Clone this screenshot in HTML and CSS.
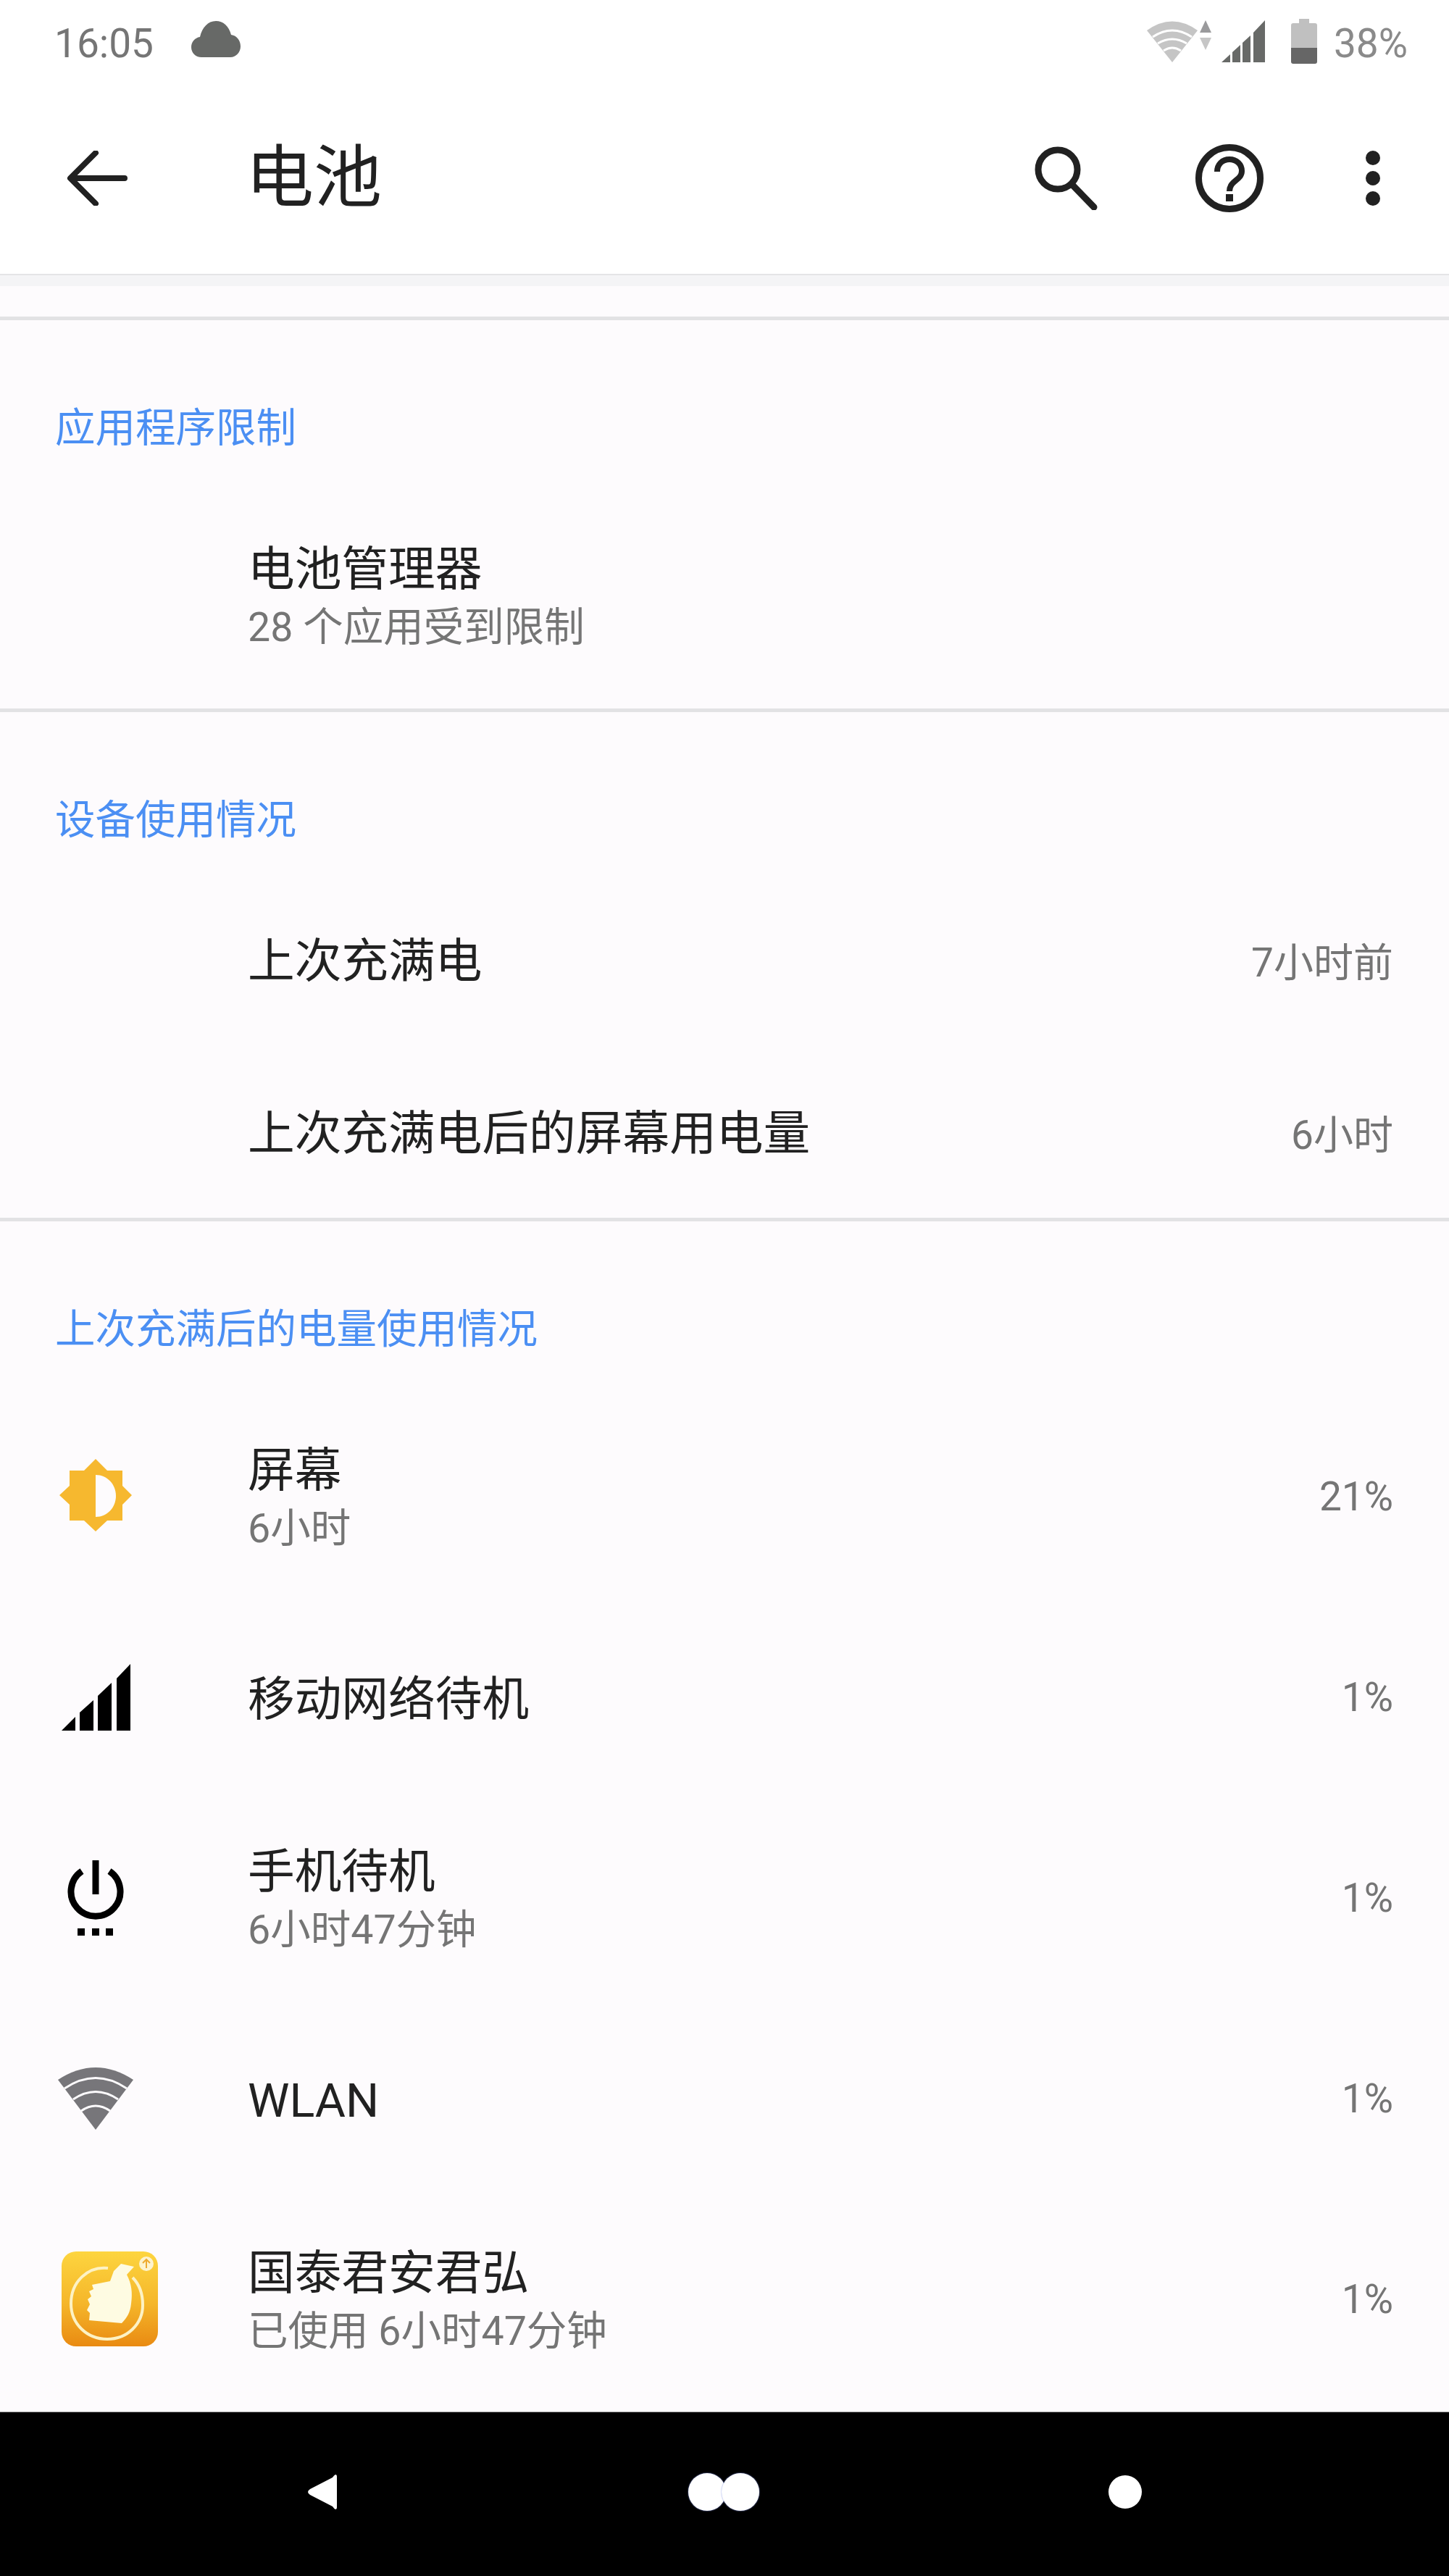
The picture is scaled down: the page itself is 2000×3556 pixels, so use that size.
FILE: index.html
```html
<!DOCTYPE html>
<html lang="zh-CN">
<head>
    <meta charset="UTF-8">
    <title>电池</title>
    <link rel="stylesheet" href="styles.css">
</head>
<body>
    <div class="phone">
        <header class="top">
            <div class="status-bar">
                <div class="status-left">
                    <span class="clock">16:05</span>
                    <svg class="cloud" width="68" height="50" viewBox="0 0 68 50"><path d="M14 50C6 50 0 44 0 36c0-7 5-13 12-14C15 9 23 0 34 0c10 0 18 7 21 19 8 1 13 8 13 16 0 8-6 15-14 15z"/></svg>
                </div>
                <div class="status-right">
                    <svg class="wifi-small" width="90" height="60" viewBox="0 0 90 60">
                        <path class="wifi-dim" d="M0 15Q35-10 70 15L35 59z"/>
                        <path class="wifi-gap" d="M8 24Q35 6 62 24M15 33Q35 21 55 33M23 43Q35 35 47 43"/>
                        <path class="arrow-up" d="M81 1l8 17H73z"/>
                        <path class="arrow-down" d="M73 25h16l-8 17z"/>
                    </svg>
                    <svg class="signal-small" width="60" height="58" viewBox="0 0 60 58"><path d="M0 58l12-11v11zM15 44l11-10v24H15zM29 31l11-10v37H29zM44 17L60 0v58H44z"/></svg>
                    <svg class="battery" width="36" height="62" viewBox="0 0 36 62">
                        <path class="battery-empty" d="M11 0h14v6h8q3 0 3 3v32H0V9q0-3 3-3h8z"/>
                        <path class="battery-full" d="M0 40h36v19q0 3-3 3H3q-3 0-3-3z"/>
                    </svg>
                    <span class="level">38%</span>
                </div>
            </div>
            <div class="toolbar">
                <svg class="back" width="84" height="76" viewBox="0 0 84 76"><path d="M80 38H6M40 3L5 38l35 35" /></svg>
                <h1 class="title">电池</h1>
                <div class="actions">
                    <svg class="search" width="88" height="88" viewBox="0 0 88 88"><circle cx="32" cy="32" r="27"/><path d="M52 53l30 31"/></svg>
                    <svg class="help" width="96" height="96" viewBox="0 0 96 96">
                        <circle cx="48" cy="48" r="42.5"/>
                        <path d="M31 39c0-10 7-17 17-17s17 7 17 16c0 13-17 13-17 28"/>
                        <rect class="help-dot" x="43" y="70" width="10" height="10"/>
                    </svg>
                    <div class="overflow"><span></span><span></span><span></span></div>
                </div>
            </div>
        </header>

        <main class="content">
            <section class="group first">
                <h2 class="group-head">应用程序限制</h2>
                <div class="row tall">
                    <div class="row-icon"></div>
                    <div class="row-text">
                        <div class="row-title">电池管理器</div>
                        <div class="row-sub">28 个应用受到限制</div>
                    </div>
                </div>
            </section>

            <section class="group">
                <h2 class="group-head">设备使用情况</h2>
                <div class="row short">
                    <div class="row-icon"></div>
                    <div class="row-text"><div class="row-title">上次充满电</div></div>
                    <div class="row-value">7小时前</div>
                </div>
                <div class="row short">
                    <div class="row-icon"></div>
                    <div class="row-text"><div class="row-title">上次充满电后的屏幕用电量</div></div>
                    <div class="row-value">6小时</div>
                </div>
            </section>

            <section class="group usage">
                <h2 class="group-head">上次充满后的电量使用情况</h2>
                <div class="row">
                    <div class="row-icon">
                        <svg class="sun-icon" width="100" height="100" viewBox="0 0 100 100"><path class="sun" d="M50 0l16 16h21v21l13 13-13 13v22H66L50 100 34 85H14V63L0 50l14-13V16h20z"/><path class="sun-cut" d="M50 22c16 0 28 13 28 29S66 80 50 80z"/></svg>
                    </div>
                    <div class="row-text">
                        <div class="row-title">屏幕</div>
                        <div class="row-sub">6小时</div>
                    </div>
                    <div class="row-value">21%</div>
                </div>
                <div class="row">
                    <div class="row-icon">
                        <svg width="95" height="92" viewBox="0 0 95 92"><path d="M0 92l19-19v19zM25 92V67l19-17v42zM50 92V44l19-18v66zM76 92V20L95 0v92z"/></svg>
                    </div>
                    <div class="row-text"><div class="row-title">移动网络待机</div></div>
                    <div class="row-value">1%</div>
                </div>
                <div class="row">
                    <div class="row-icon">
                        <svg class="power" width="78" height="104" viewBox="0 0 78 104">
                            <path d="M20 15a34 34 0 1 0 38 0M39 0v47" />
                            <rect x="14" y="94" width="10" height="10"/><rect x="34" y="94" width="10" height="10"/><rect x="53" y="94" width="10" height="10"/>
                        </svg>
                    </div>
                    <div class="row-text">
                        <div class="row-title">手机待机</div>
                        <div class="row-sub">6小时47分钟</div>
                    </div>
                    <div class="row-value">1%</div>
                </div>
                <div class="row">
                    <div class="row-icon">
                        <svg width="104" height="86" viewBox="0 0 104 86">
                            <path class="wifi-fill" d="M0 17Q52-17 104 17L52 86z"/>
                            <path class="wifi-line" d="M9 29Q52 0 95 29M21 44Q52 23 83 44M32 60Q52 46 72 60"/>
                        </svg>
                    </div>
                    <div class="row-text"><div class="row-title">WLAN</div></div>
                    <div class="row-value">1%</div>
                </div>
                <div class="row">
                    <div class="row-icon app">
                        <svg width="133" height="131" viewBox="0 0 133 131">
                            <defs>
                                <linearGradient id="appBg" x1="0" y1="0" x2="0" y2="1">
                                    <stop offset="0" stop-color="#fdd53f"/>
                                    <stop offset="0.55" stop-color="#f5b62a"/>
                                    <stop offset="1" stop-color="#e98a12"/>
                                </linearGradient>
                            </defs>
                            <rect width="133" height="131" rx="20" fill="url(#appBg)"/>
                            <path d="M64 23C36 20 13 42 13 72c0 28 22 49 50 49s49-21 49-47c0-17-6-30-14-38" fill="none" stroke="#fdf2c4" stroke-width="4"/>
                            <!-- thumb up, knuckles on the left edge -->
                            <path d="M100 21L82 17 72 27 67 41 42 46 44 52 38 55 41 62 36 66 39 73 35 81 39 85 38 95 83 99C90 92 95 84 96 72 98 58 97 45 90 32z" fill="#fefbe2"/>
                            <circle cx="117" cy="17" r="10" fill="#fdf3cf"/>
                            <path d="M117 23V12M112 16l5-5 5 5" fill="none" stroke="#eeaa30" stroke-width="2"/>
                        </svg>
                    </div>
                    <div class="row-text">
                        <div class="row-title">国泰君安君弘</div>
                        <div class="row-sub">已使用 6小时47分钟</div>
                    </div>
                    <div class="row-value">1%</div>
                </div>
            </section>
        </main>

        <nav class="nav-bar">
            <svg class="nav-back" width="40" height="48" viewBox="0 0 40 48"><path d="M38 0q2 0 2 3v42q0 3-2 3-2-1-4-4L3 28q-6-4 0-8L34 4q2-3 4-4z"/></svg>
            <div class="nav-home"><span></span><span></span></div>
            <span class="nav-recent"></span>
        </nav>
    </div>
</body>
</html>
```

FILE: styles.css
```css
* {
    box-sizing: border-box;
}
body {
    margin: 0;
    font-family: Roboto, "Noto Sans CJK SC", sans-serif;
    background-color: #fdfbfd;
    color: #212121;
}
.phone {
    display: flex;
    flex-direction: column;
    height: 3556px;
    overflow: hidden;
}

/* status bar and toolbar */
.top {
    flex: none;
    height: 378px;
    background-color: #fff;
    box-shadow: 0 2px 0 #e4e4e6, 0 17px 0 #f4f4f6;
    position: relative;
    z-index: 1;
}
.status-bar {
    display: flex;
    justify-content: space-between;
    height: 114px;
    padding: 28px 57px 0 75px;
    color: #757575;
}
.status-left,
.status-right {
    display: flex;
    align-items: flex-start;
}
.clock {
    font-size: 55px;
    line-height: 64px;
}
.cloud {
    margin: 1px 0 0 52px;
    fill: #676967;
}
.wifi-small {
    margin: -1px 0 0;
}
.wifi-dim {
    fill: #c5c5c5;
}
.wifi-gap {
    fill: none;
    stroke: #fff;
    stroke-width: 3;
}
.arrow-up {
    fill: #9a9a9c;
}
.arrow-down {
    fill: #c6c6c6;
}
.signal-small {
    margin: 0 0 0 13px;
    fill: #686a68;
}
.battery {
    margin: -2px 0 0 36px;
}
.battery-empty {
    fill: #c0c0c0;
}
.battery-full {
    fill: #666;
}
.level {
    margin-left: 23px;
    font-size: 55px;
    line-height: 64px;
    color: #8a8a8a;
}
.toolbar {
    display: flex;
    align-items: center;
    height: 264px;
    padding: 0 0 0 92px;
}
.back {
    flex: none;
    fill: none;
    stroke: #212121;
    stroke-width: 8;
    stroke-linecap: round;
    stroke-linejoin: round;
}
.title {
    margin: 0 0 0 163px;
    font-size: 94px;
    font-weight: 400;
    line-height: 100px;
}
.actions {
    display: flex;
    align-items: center;
    margin-left: auto;
    padding-right: 95px;
}
.search {
    fill: none;
    stroke: #212121;
    stroke-width: 9;
    stroke-linecap: round;
}
.help {
    margin-left: 133px;
    fill: none;
    stroke: #212121;
    stroke-width: 9;
}
.help path {
    stroke-width: 8;
}
.help-dot {
    fill: #212121;
    stroke: none;
}
.overflow {
    display: flex;
    flex-direction: column;
    gap: 8px;
    margin-left: 140px;
}
.overflow span {
    width: 20px;
    height: 20px;
    border-radius: 50%;
    background-color: #212121;
}

/* list */
.content {
    flex: 1;
    min-height: 0;
    padding-top: 59px;
    overflow: hidden;
}
.group {
    border-top: 5px solid #e2e2e4;
}
.group-head {
    margin: 0;
    height: 222px;
    padding: 122px 0 0 76px;
    font-size: 55.5px;
    font-weight: 400;
    line-height: 56px;
    color: #4b8ff3;
}
.usage .group-head {
    height: 241px;
}
.row {
    display: flex;
    align-items: center;
    height: 277px;
    padding-right: 77px;
}
.row.short {
    height: 238px;
}
.row.tall {
    height: 314px;
}
.row-icon {
    flex: none;
    display: flex;
    justify-content: center;
    width: 264px;
    margin-right: 78px;
}
.row-icon.app {
    justify-content: flex-start;
    padding-left: 85px;
}
.sun-icon {
    margin-top: -4px;
}
.row-text {
    flex: 1;
    padding-top: 6px;
}
.row-title {
    font-size: 64.7px;
    line-height: 80px;
}
.row-sub {
    font-size: 55.5px;
    line-height: 72px;
    color: #757575;
    margin-top: 5px;
}
.row-value {
    font-size: 55px;
    color: #757575;
}
.sun {
    fill: #f6b82f;
}
.sun-cut {
    fill: #fdfbfd;
}
.power path {
    fill: none;
    stroke: #000;
    stroke-width: 9;
}
.wifi-fill {
    fill: #77767a;
}
.wifi-line {
    fill: none;
    stroke: #fdfbfd;
    stroke-width: 3;
}

/* navigation bar */
.nav-bar {
    flex: none;
    display: flex;
    align-items: center;
    height: 227px;
    padding: 0 0 7px 425px;
    border-top: 1px solid #a8a8a8;
    background-color: #000;
}
.nav-back {
    fill: #fff;
}
.nav-home {
    display: flex;
    margin-left: 485px;
}
.nav-home span {
    width: 52px;
    height: 52px;
    border-radius: 50%;
    background-color: #fff;
    box-shadow: 0 0 2px #7d8fe0;
}
.nav-home span + span {
    margin-left: -6px;
}
.nav-recent {
    width: 46px;
    height: 46px;
    margin-left: 482px;
    border-radius: 50%;
    background-color: #fff;
}
```
